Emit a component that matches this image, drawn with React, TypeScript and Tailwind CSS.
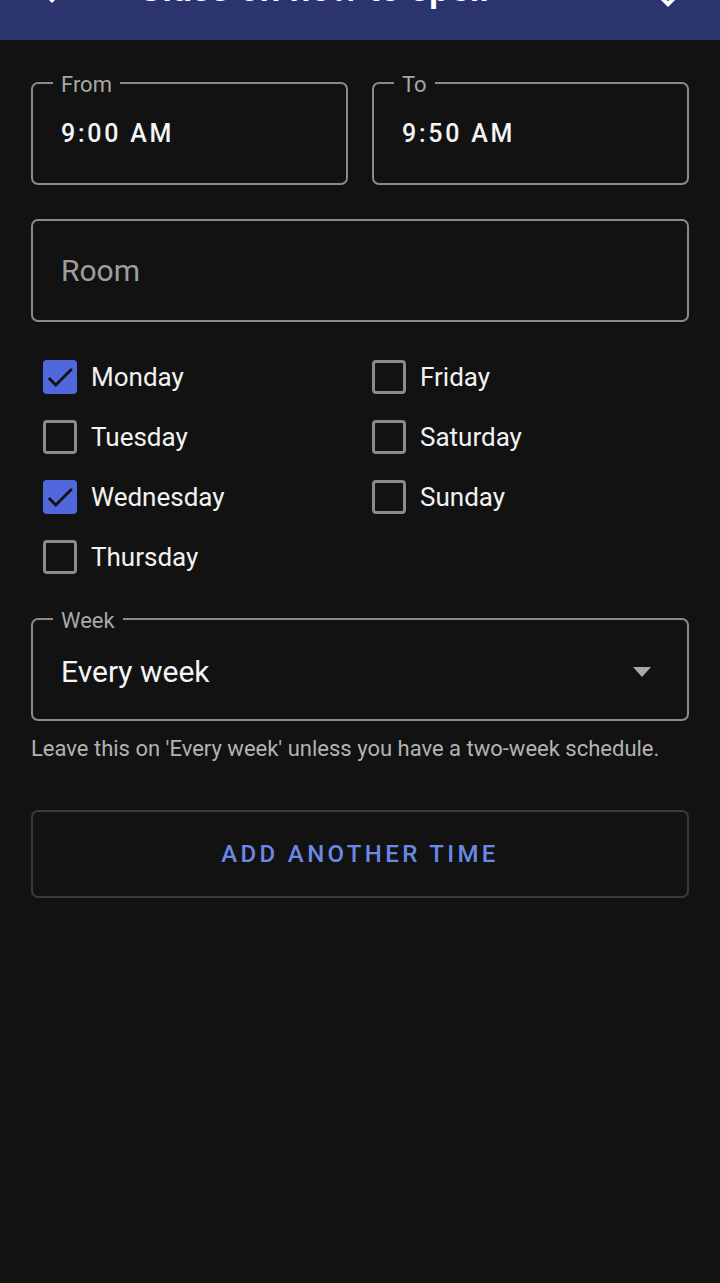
import React from "react"

const days = [
  { name: "Monday", checked: true },
  { name: "Tuesday", checked: false },
  { name: "Wednesday", checked: true },
  { name: "Thursday", checked: false },
  { name: "Friday", checked: false },
  { name: "Saturday", checked: false },
  { name: "Sunday", checked: false },
]

const Outlined = ({ label, children, className = "" }) => (
  <div
    className={`relative flex items-center rounded-[7px] border-2 border-[#8a8a8a] px-[28px] ${className}`}
  >
    {label && (
      <span className="absolute -top-[13px] left-[20px] bg-[#121212] px-[8px] text-[22px] leading-[28px] text-[#a8a8a8]">
        {label}
      </span>
    )}
    {children}
  </div>
)

const DayBox = ({ name, checked }) => (
  <label className="flex h-[60px] items-center pl-[12px]">
    {checked ? (
      <span className="flex h-[34px] w-[34px] items-center justify-center rounded-[4px] bg-[#5068dc]">
        <svg viewBox="0 0 24 24" className="h-[34px] w-[34px]">
          <path
            d="M9 16.17L4.83 12l-1.42 1.41L9 19 21 7l-1.41-1.41z"
            fill="#121212"
          />
        </svg>
      </span>
    ) : (
      <span className="h-[34px] w-[34px] rounded-[4px] border-[3px] border-[#8a8a8a]" />
    )}
    <span className="ml-[14px] text-[26px] text-[#f2f2f2]">{name}</span>
  </label>
)

const App = () => {
  return (
    <div className="min-h-screen overflow-hidden bg-[#121212] font-['Roboto',sans-serif]">
      <header className="-mt-[40px] flex h-[80px] items-center bg-[#2c3470] text-white">
        <svg viewBox="0 0 24 24" className="-mt-[26px] ml-[28px] h-[48px] w-[48px] shrink-0">
          <path
            d="M20 11H7.83l5.59-5.59L12 4l-8 8 8 8 1.41-1.41L7.83 13H20v-2z"
            fill="white"
          />
        </svg>
        <h1 className="-mt-[23px] ml-[62px] text-[37px] font-semibold leading-none">
          Class on how to spell
        </h1>
        <svg viewBox="0 0 24 24" className="-mt-[14px] ml-auto mr-[22px] h-[48px] w-[48px] shrink-0">
          <path
            d="M9 16.17L4.83 12l-1.42 1.41L9 19 21 7l-1.41-1.41z"
            fill="white"
          />
        </svg>
      </header>

      <main className="px-[31px] pt-[42px]">
        <div className="grid grid-cols-2 gap-[24px]">
          <Outlined label="From" className="h-[103px]">
            <span className="text-[25px] font-medium tracking-[0.11em] text-[#f5f5f5]">
              9:00 AM
            </span>
          </Outlined>
          <Outlined label="To" className="h-[103px]">
            <span className="text-[25px] font-medium tracking-[0.11em] text-[#f5f5f5]">
              9:50 AM
            </span>
          </Outlined>
        </div>

        <Outlined className="mt-[34px] h-[103px]">
          <span className="text-[30px] text-[#9e9e9e]">Room</span>
        </Outlined>

        <div className="mt-[25px] grid grid-flow-col grid-cols-2 grid-rows-4">
          {days.map((d) => (
            <DayBox key={d.name} name={d.name} checked={d.checked} />
          ))}
        </div>

        <Outlined label="Week" className="mt-[31px] h-[103px] pt-[4px]">
          <span className="text-[30px] text-[#f5f5f5]">Every week</span>
          <svg viewBox="0 0 20 10" className="ml-auto mr-[7px] h-[10px] w-[20px]">
            <path d="M1 0h18l-9 10z" fill="#a8a8a8" />
          </svg>
        </Outlined>
        <p className="mt-[14px] text-[22px] leading-[28px] text-[#b3b3b3]">
          Leave this on 'Every week' unless you have a two-week schedule.
        </p>

        <button className="mt-[47px] flex h-[88px] w-full items-center justify-center rounded-[7px] border-2 border-[#3a3a3a] text-[24px] font-medium tracking-[0.14em] text-[#6b88e6]">
          ADD ANOTHER TIME
        </button>
      </main>
    </div>
  )
}

export default App
